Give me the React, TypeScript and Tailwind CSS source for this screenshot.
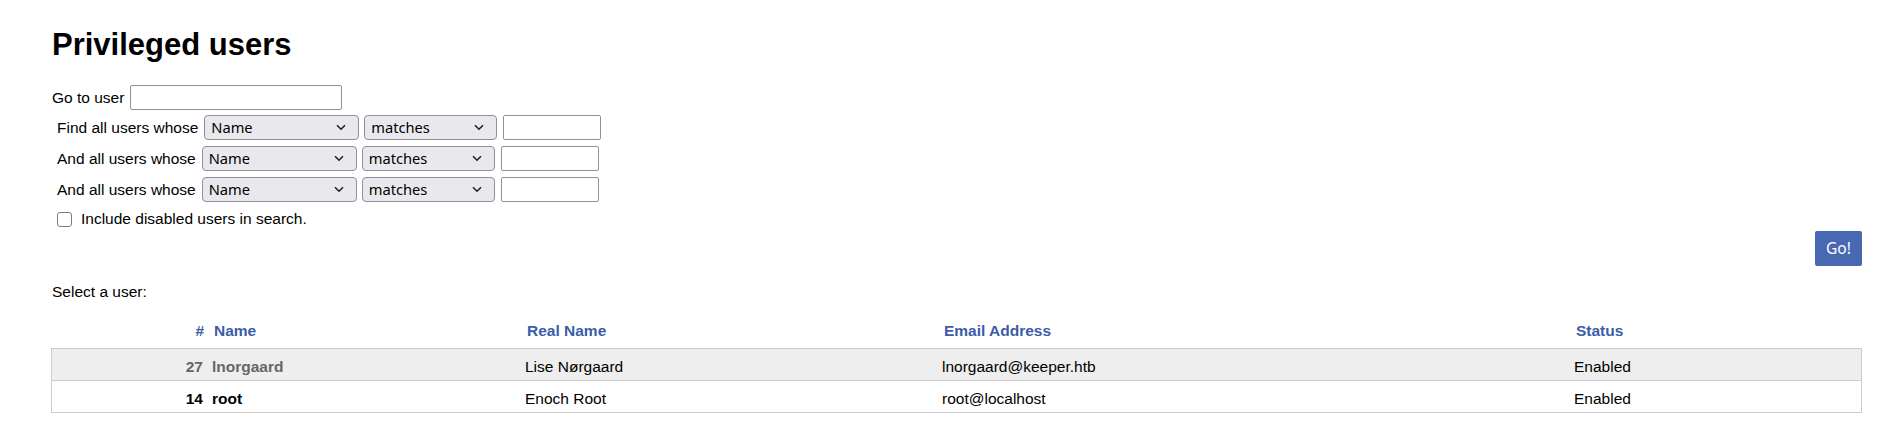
import { useState } from "react";

type UserRow = {
  id: number;
  name: string;
  realName: string;
  email: string;
  status: string;
};

const users: UserRow[] = [
  { id: 27, name: "lnorgaard", realName: "Lise Nørgaard", email: "lnorgaard@keeper.htb", status: "Enabled" },
  { id: 14, name: "root", realName: "Enoch Root", email: "root@localhost", status: "Enabled" },
];

const cols = "grid grid-cols-[156px_313px_417px_632px_1fr]";

function FakeSelect({ value, width }: { value: string; width: string }) {
  return (
    <div className={`relative h-[25px] ${width}`}>
      <select
        defaultValue={value}
        className="appearance-none h-full w-full bg-[#e9e9ed] border border-[#8f8f9d] rounded-[4px] pl-[6px] text-[14.67px] text-black font-['Noto_Sans',sans-serif] leading-none outline-none"
      >
        <option>{value}</option>
      </select>
      {/* chevron */}
      <svg
        className="absolute right-[13px] top-[9px] pointer-events-none"
        width="10"
        height="7"
        viewBox="0 0 10 7"
      >
        <path d="M1 1.2 L5 5.2 L9 1.2" fill="none" stroke="#222" strokeWidth="1.6" />
      </svg>
    </div>
  );
}

function SearchRow({ label }: { label: string }) {
  return (
    <div className="flex items-center h-[25px] pl-[5px]">
      <span className="mr-[6px]">{label}</span>
      <FakeSelect value="Name" width="w-[155px]" />
      <div className="w-[5px]" />
      <FakeSelect value="matches" width="w-[133px]" />
      <input
        type="text"
        className="ml-[6px] h-[25px] w-[98px] bg-white border border-[#8f8f9d] rounded-[2px] outline-none"
      />
    </div>
  );
}

export default function App() {
  const [disabled, setDisabled] = useState(false);

  return (
    <div className="bg-white text-black pt-[27px] pb-[31px] pl-[52px] pr-[39px] font-['Liberation_Sans',Arial,sans-serif] text-[15.5px]">
      <h1 className="text-[31px] leading-[36px] font-bold">
        Privileged users
      </h1>

      {/* search form */}
      <div className="mt-[22px] flex items-center h-[25px]">
        <span className="mr-[6px]">Go to user</span>
        <input
          type="text"
          className="h-[25px] w-[212px] bg-white border border-[#8f8f9d] rounded-[2px] outline-none"
        />
      </div>

      <div className="mt-[5px] flex flex-col gap-[6px]">
        <SearchRow label="Find all users whose" />
        <SearchRow label="And all users whose" />
        <SearchRow label="And all users whose" />
      </div>

      <label className="mt-[8px] flex items-center h-[18px] pl-[5px]">
        <input
          type="checkbox"
          checked={disabled}
          onChange={() => setDisabled(!disabled)}
          className="appearance-none w-[15px] h-[15px] bg-white border-[1.5px] border-[#7c7c88] rounded-[3px]"
        />
        <span className="ml-[9px]">Include disabled users in search.</span>
      </label>

      <div className="mt-[3px] flex justify-end">
        <button className="h-[35px] w-[47px] bg-[#4868b2] rounded-[2px] text-white text-[15.5px] font-['Noto_Sans',sans-serif]">
          Go!
        </button>
      </div>

      <p className="mt-[17px] h-[18px] leading-[18px]">Select a user:</p>

      {/* users table */}
      <div className="mt-[10px] -ml-[1px]">
        <div className={`${cols} h-[37px] pt-[2px] items-center font-bold text-[#3b5ca8]`}>
          <div className="text-right pr-[3px]">#</div>
          <div className="pl-[7px]">Name</div>
          <div className="pl-[7px]">Real Name</div>
          <div className="pl-[7px]">Email Address</div>
          <div className="pl-[7px]">Status</div>
        </div>

        {users.map((u, i) => (
          <div
            key={u.id}
            className={`${cols} items-center pt-[4px] border-x border-t border-[#cccccc] ${
              i === 0 ? "h-[32px] bg-[#eeeeee]" : "h-[33px] border-b bg-white"
            }`}
          >
            <div className={`text-right pr-[5px] font-bold ${i === 0 ? "text-[#666666]" : "text-black"}`}>
              {u.id}
            </div>
            <div className={`pl-[4px] font-bold ${i === 0 ? "text-[#666666]" : "text-black"}`}>
              {u.name}
            </div>
            <div className="pl-[4px]">{u.realName}</div>
            <div className="pl-[4px]">{u.email}</div>
            <div className="pl-[4px]">{u.status}</div>
          </div>
        ))}
      </div>
    </div>
  );
}
